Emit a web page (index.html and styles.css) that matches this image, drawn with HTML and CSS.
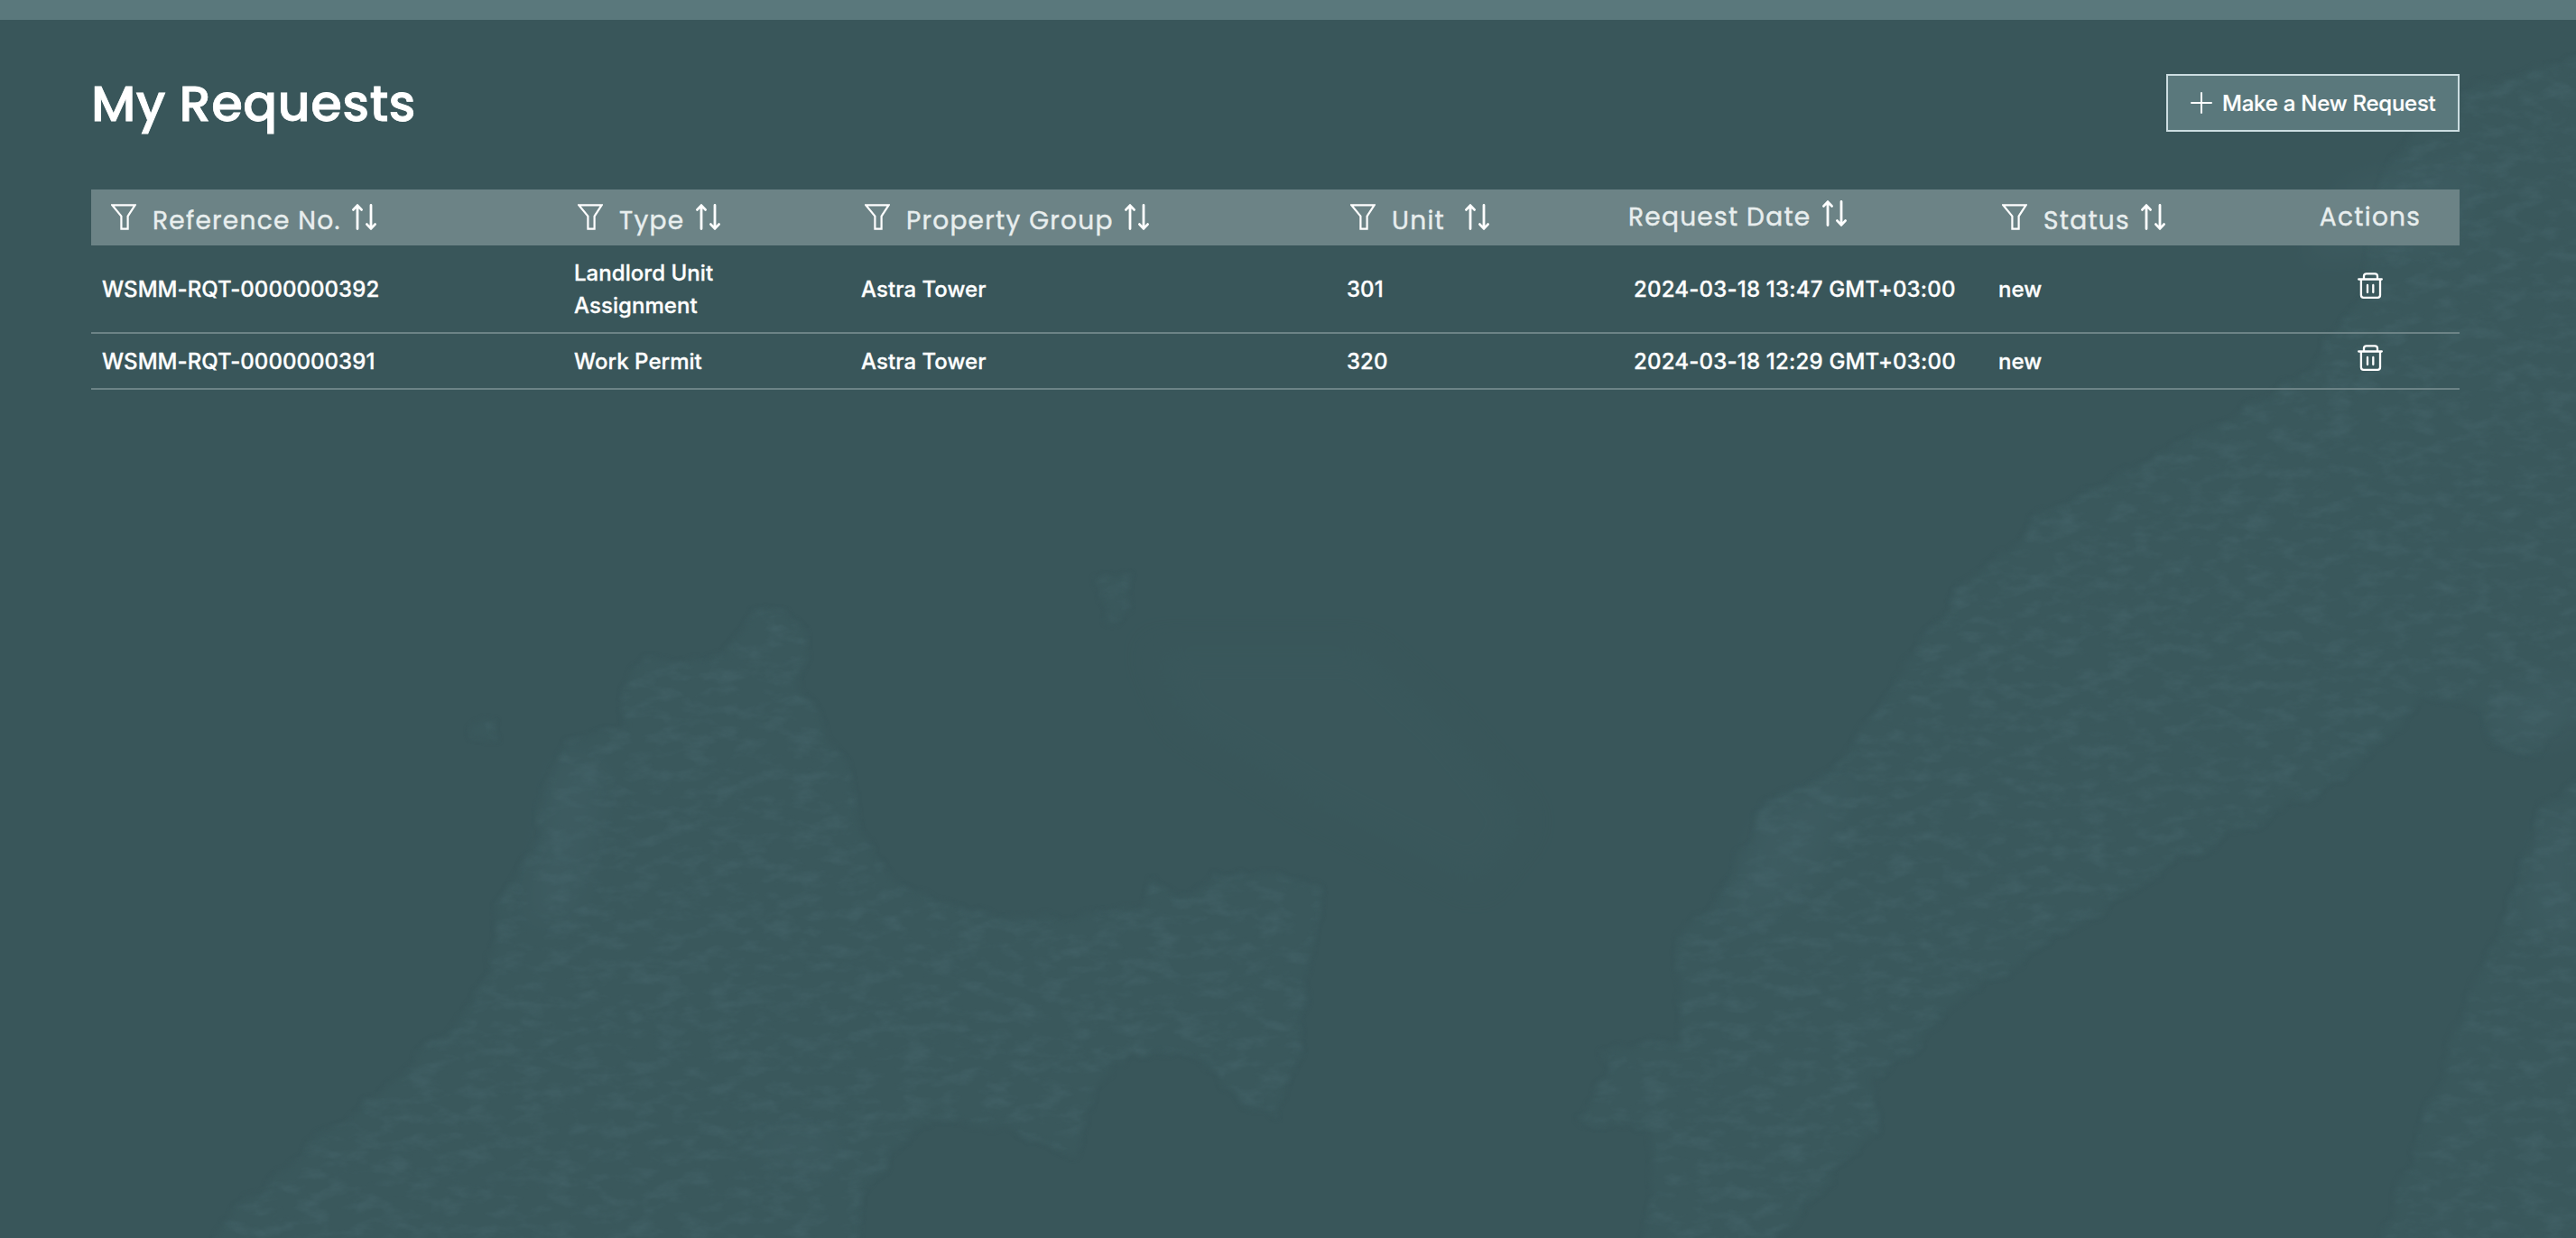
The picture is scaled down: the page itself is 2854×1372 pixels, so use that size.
FILE: index.html
```html
<!DOCTYPE html>
<html lang="en">
<head>
<meta charset="utf-8">
<title>My Requests</title>
<link rel="stylesheet" href="styles.css">
</head>
<body>
<svg width="0" height="0" class="sprite" aria-hidden="true">
  <symbol id="filter" viewBox="0 0 28 29"><path d="M1.4 1.4H26.6L18.6 13.6V27.6H11.4V13.6Z" fill="none" stroke="#fff" stroke-width="2.2"/></symbol>
  <symbol id="sort" viewBox="0 0 27 29"><path d="M6 27.5V2M1.5 6.4L6 1.6L10.5 6.4M21 1.5V27M16.5 22.6L21 27.4L25.5 22.6" fill="none" stroke="#fff" stroke-width="2.8" stroke-linecap="round" stroke-linejoin="round"/></symbol>
  <symbol id="trash" viewBox="0 0 28 29"><path d="M1.2 7.5H26.8M7 7V4Q7 1.3 9.7 1.3H19.3Q22 1.3 22 4V7M3.9 8V25Q3.9 27.8 6.7 27.8H22.2Q25 27.8 25 25V8M11 14V22M17.3 14V22" fill="none" stroke="#fff" stroke-width="2.3" stroke-linecap="round"/></symbol>
</svg>
<svg class="map" viewBox="0 0 1568 754" preserveAspectRatio="none" aria-hidden="true">
  <defs>
    <filter id="coast" x="-5%" y="-5%" width="110%" height="110%" color-interpolation-filters="sRGB">
      <feTurbulence type="fractalNoise" baseFrequency="0.06" numOctaves="4" seed="4" result="n"/>
      <feDisplacementMap in="SourceGraphic" in2="n" scale="12" xChannelSelector="R" yChannelSelector="G"/>
      <feGaussianBlur stdDeviation="1.8" result="land"/>
      <feTurbulence type="fractalNoise" baseFrequency="0.06 0.13" numOctaves="5" seed="9"/>
      <feColorMatrix values="0 0 0 0 .28  0 0 0 0 .405  0 0 0 0 .43  1.1 0 0 0 -.48"/>
      <feComposite in2="land" operator="in" result="grain"/>
      <feMerge><feMergeNode in="land"/><feMergeNode in="grain"/></feMerge>
    </filter>
    <filter id="soft" x="-30%" y="-30%" width="160%" height="160%" color-interpolation-filters="sRGB"><feGaussianBlur stdDeviation="9"/></filter>
  </defs>
  <g filter="url(#coast)" class="land">
    <path d="M462 372L478 368L490 385L488 420L500 440L518 470L525 510L545 540L590 556L648 560L695 552L703 535L715 548L735 535L770 532L806 540L798 580L790 620L792 640L775 680L745 662L730 645L690 640L665 665L655 705L620 690L570 680L545 700L525 730L520 780H110L150 730L200 690L245 655L290 610L300 580L305 550L325 515L335 470L345 452L378 445L380 420L390 400L425 405L445 395Z"/>
    <path d="M1590 30L1500 55L1450 100L1440 180L1400 230L1318 275L1244 314L1187 366L1151 421L1116 470L1077 488L1055 534L1020 577L1024 635L973 638L980 655L957 684L1006 687L1000 780H1060L1099 733L1143 685L1143 657L1195 605L1222 589L1318 528L1362 507L1428 473L1463 440L1472 424L1512 434L1516 452L1543 458L1551 449L1590 430Z"/>
    <path d="M1590 460L1547 492L1538 519L1525 559L1499 620L1472 693L1440 780H1590Z"/>
    <path d="M667 352H690L682 378H674ZM285 442L305 440L303 450H288Z"/>
  </g>
  <g filter="url(#soft)" class="glow">
    <path d="M340 460L370 470L350 560L320 560ZM1070 500L1130 470L1100 540L1050 570ZM1548 500L1568 490V580L1535 560ZM1430 110L1510 100L1490 150L1400 160ZM460 690L510 690L505 715L465 705ZM1510 430L1568 410V450L1530 455Z"/>
  </g>
  <g filter="url(#soft)" class="shoal">
    <path d="M700 395L830 395L880 440L930 500L900 540L800 490L720 440Z"/>
  </g>
</svg>
<div class="topbar"></div>
<main class="page">
  <header class="heading">
    <h1 class="title">My Requests</h1>
    <button class="new-request"><svg class="plus" viewBox="0 0 24 24"><path d="M12 1V23M1 12H23" stroke="#fff" stroke-width="2" stroke-linecap="round"/></svg><span>Make a New Request</span></button>
  </header>
  <section class="table">
    <div class="row head">
      <div class="th lead"><svg class="i-filter"><use href="#filter"/></svg><span>Reference No.</span><svg class="i-sort"><use href="#sort"/></svg></div>
      <div class="th"><svg class="i-filter"><use href="#filter"/></svg><span>Type</span><svg class="i-sort"><use href="#sort"/></svg></div>
      <div class="th"><svg class="i-filter"><use href="#filter"/></svg><span>Property Group</span><svg class="i-sort"><use href="#sort"/></svg></div>
      <div class="th unit"><svg class="i-filter"><use href="#filter"/></svg><span>Unit</span><svg class="i-sort"><use href="#sort"/></svg></div>
      <div class="th plain"><span>Request Date</span><svg class="i-sort"><use href="#sort"/></svg></div>
      <div class="th"><svg class="i-filter"><use href="#filter"/></svg><span>Status</span><svg class="i-sort"><use href="#sort"/></svg></div>
      <div class="th plain center"><span>Actions</span></div>
    </div>
    <div class="row first">
      <div class="td">WSMM-RQT-0000000392</div>
      <div class="td"><span>Landlord Unit<br>Assignment</span></div>
      <div class="td">Astra Tower</div>
      <div class="td">301</div>
      <div class="td when">2024-03-18 13:47 GMT+03:00</div>
      <div class="td">new</div>
      <div class="td act"><svg class="i-trash"><use href="#trash"/></svg></div>
    </div>
    <div class="row second">
      <div class="td">WSMM-RQT-0000000391</div>
      <div class="td">Work Permit</div>
      <div class="td">Astra Tower</div>
      <div class="td">320</div>
      <div class="td when">2024-03-18 12:29 GMT+03:00</div>
      <div class="td">new</div>
      <div class="td act"><svg class="i-trash"><use href="#trash"/></svg></div>
    </div>
  </section>
</main>
</body>
</html>
```
FILE: styles.css
```css
* { box-sizing: border-box; }
body { margin: 0; height: 1372px; overflow: hidden; background: #39565a; color: #fff; font-family: Inter, "Liberation Sans", sans-serif; }
.sprite { display: block; }
.map { position: absolute; inset: 0; width: 2854px; height: 1372px; z-index: -1; }
.land { fill: #3a585c; }
.glow { fill: #4a6a72; opacity: .22; }
.shoal { fill: #3b595d; opacity: .5; }
.topbar { height: 22px; background: #5a787c; }
.page { padding: 60px 129px 0 101px; }
.heading { display: flex; justify-content: space-between; align-items: flex-start; height: 128px; }
.title { margin: 0; font-family: Poppins, Inter, sans-serif; font-weight: 500; font-size: 56px; line-height: 66px; letter-spacing: .35px; -webkit-text-stroke: .8px #fff; }
.new-request { display: flex; align-items: center; gap: 11px; width: 325px; height: 64px; padding: 0 0 0 25px; border: 2px solid #ccdde1; background: #5a787c; color: #fff; font: 500 24px/36px Inter, sans-serif; letter-spacing: -.24px; white-space: nowrap; -webkit-text-stroke: .2px #fff; }
.new-request span { padding-top: 2px; }
.plus { width: 24px; height: 24px; }
.row { display: grid; grid-template-columns: 523px 318px 538px 318px 404px 325px 198px; }
.head { height: 62px; background: #6c8386; font: 400 28px/36px Poppins, Inter, sans-serif; letter-spacing: 1.28px; color: #e8eeee; -webkit-text-stroke: .4px #e8eeee; }
.th { display: flex; align-items: flex-start; padding: 16px 0 0 16px; white-space: nowrap; }
.lead { padding-left: 22px; }
.plain { padding: 12px 0 0 6px; }
.center { justify-content: center; padding-left: 0; }
.th span { padding-top: 1px; }
.i-filter { width: 28px; height: 29px; margin-right: 18px; }
.i-sort { width: 27px; height: 29px; margin-left: 12.5px; }
.unit .i-sort { margin-left: 22px; }
.plain .i-sort { margin-left: 12px; }
.td { display: flex; align-items: center; padding: 2px 0 0 12px; font: 500 24px/36px Inter, sans-serif; letter-spacing: .05px; white-space: nowrap; -webkit-text-stroke: .3px #fff; }
.when { letter-spacing: .2px; }
.first { height: 98px; border-bottom: 2px solid #6c8386; }
.second { height: 62px; border-bottom: 2px solid #6c8386; }
.act { justify-content: center; padding: 0 0 7px; }
.i-trash { width: 28px; height: 29px; }
```
